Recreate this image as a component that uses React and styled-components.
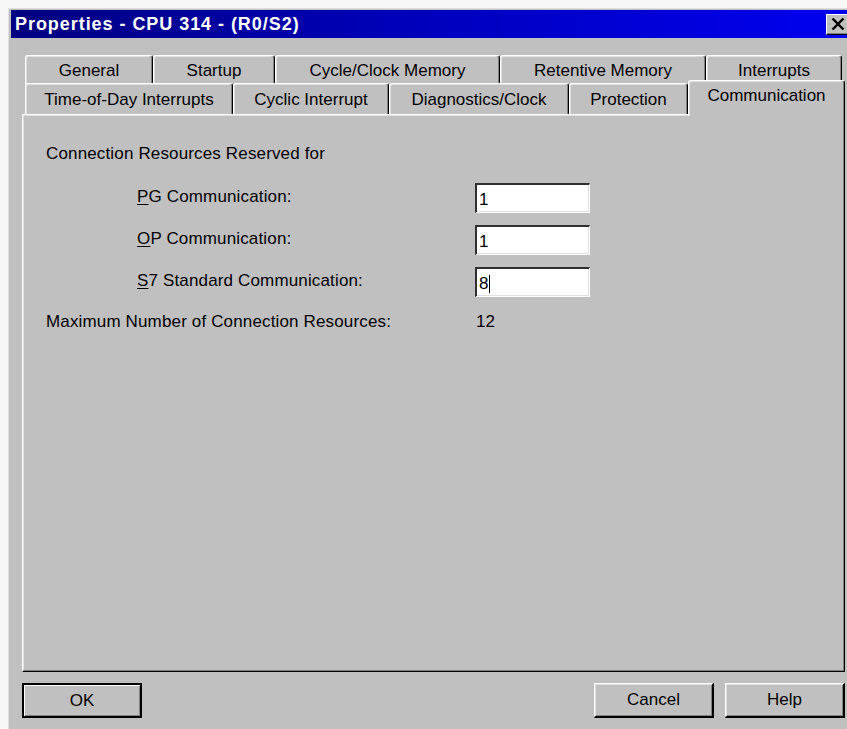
import React from 'react';
import styled, { createGlobalStyle } from 'styled-components';

const GlobalStyle = createGlobalStyle`
  html, body { margin: 0; padding: 0; background: #f7f7f7; }
  body { font-family: "Liberation Sans", Arial, sans-serif; color: #000; }
`;

const Screen = styled.div`
  width: 847px;
  height: 729px;
  overflow: hidden;
  box-sizing: border-box;
  padding: 8px 0 0 8px;
`;

const Window = styled.div`
  width: 845px;
  height: 740px;
  box-sizing: border-box;
  background: #c0c0c0;
  border-top: 1px solid #dfdfdf;
  border-left: 1px solid #dfdfdf;
  padding: 1px 2px 0 2px;
  display: flex;
  flex-direction: column;
`;

const TitleBar = styled.div`
  height: 28px;
  flex: none;
  display: flex;
  align-items: center;
  justify-content: space-between;
  padding: 0 2px 0 4px;
  background: linear-gradient(to right, #000080 0%, #0000b8 45%, #0000f0 100%);
`;

const Title = styled.span`
  color: #fff;
  font-weight: bold;
  font-size: 18px;
  letter-spacing: 0.95px;
`;

const CloseButton = styled.div`
  width: 23px;
  height: 21px;
  box-sizing: border-box;
  background: #c0c0c0;
  border-top: 1px solid #fff;
  border-left: 1px solid #fff;
  border-right: 1px solid #000;
  border-bottom: 1px solid #000;
  box-shadow: inset -1px -1px 0 #808080;
  display: flex;
  align-items: center;
  justify-content: center;
`;

const Body = styled.div`
  padding: 17px 0 0 11px;
  display: flex;
  flex-direction: column;
`;

const TabStrip = styled.div`
  padding-left: 3px;
  display: flex;
  flex-direction: column;
`;

const TabRow = styled.div`
  display: flex;
  align-items: flex-end;
  height: ${p => p.$h}px;
  margin-top: ${p => p.$offset || 0}px;
`;

const Tab = styled.div`
  width: ${p => p.$w}px;
  height: ${p => (p.$active ? p.$h + 5 : p.$h)}px;
  margin-bottom: ${p => (p.$active ? -2 : 0)}px;
  flex: none;
  box-sizing: border-box;
  background: #c0c0c0;
  border-top: 1px solid #fff;
  border-left: 1px solid #fff;
  border-right: 1px solid #000;
  border-radius: 3px 3px 0 0;
  box-shadow: inset -1px 0 0 #808080, inset 1px 1px 0 #dfdfdf;
  display: flex;
  justify-content: center;
  padding-top: ${p => p.$pad}px;
  font-size: 17px;
  white-space: nowrap;
  ${p => p.$active && 'position: relative; z-index: 1;'}
`;

const Panel = styled.div`
  width: 823px;
  height: 558px;
  box-sizing: border-box;
  background: #c0c0c0;
  border-top: 1px solid #fff;
  border-left: 1px solid #fff;
  border-right: 1px solid #000;
  border-bottom: 1px solid #000;
  box-shadow: inset -1px -1px 0 #808080, inset 1px 1px 0 #dfdfdf;
  padding: 29px 0 0 23px;
  font-size: 17px;
  letter-spacing: 0.15px;
`;

const Heading = styled.div`
  line-height: 20px;
`;

const FormGrid = styled.div`
  display: grid;
  grid-template-columns: 338px 115px;
  grid-auto-rows: 30px;
  row-gap: 12px;
  margin: 19px 0 0 91px;
  align-items: center;
`;

const Label = styled.span`
  line-height: 20px;
  margin-top: -2px;
`;

const Mnemonic = styled.span`
  text-decoration: underline;
  text-underline-offset: 2px;
`;

const Field = styled.div`
  height: 30px;
  box-sizing: border-box;
  background: #fff;
  border-top: 2px solid #303030;
  border-left: 2px solid #303030;
  border-right: 1px solid #fff;
  border-bottom: 1px solid #fff;
  box-shadow: inset -1px -1px 0 #dfdfdf;
  padding: 2px 0 0 2px;
  display: flex;
  align-items: center;
  font-size: 17px;
`;

const Caret = styled.span`
  display: inline-block;
  width: 1px;
  height: 18px;
  background: #000;
`;

const MaxRow = styled.div`
  display: flex;
  margin-top: 15px;
  line-height: 20px;
`;

const MaxLabel = styled.span`
  width: 430px;
`;

const Footer = styled.div`
  width: 823px;
  margin-top: 11px;
  display: flex;
  align-items: center;
  gap: 11px;
`;

const Spacer = styled.div`
  flex: 1;
`;

const Button = styled.div`
  width: 120px;
  height: 35px;
  box-sizing: border-box;
  background: #c0c0c0;
  display: flex;
  align-items: center;
  justify-content: center;
  font-size: 17px;
  ${p =>
    p.$default
      ? `border: 2px solid #000;
         box-shadow: inset 1px 1px 0 #fff, inset -1px -1px 0 #808080;`
      : `border-top: 1px solid #fff;
         border-left: 1px solid #fff;
         border-right: 2px solid #000;
         border-bottom: 2px solid #000;
         box-shadow: inset 1px 1px 0 #dfdfdf, inset -1px -1px 0 #808080;`}
`;

const backTabs = [
  { label: 'General', w: 128 },
  { label: 'Startup', w: 122 },
  { label: 'Cycle/Clock Memory', w: 225 },
  { label: 'Retentive Memory', w: 206 },
  { label: 'Interrupts', w: 136 },
];

const frontTabs = [
  { label: 'Time-of-Day Interrupts', w: 208 },
  { label: 'Cyclic Interrupt', w: 156 },
  { label: 'Diagnostics/Clock', w: 180 },
  { label: 'Protection', w: 119 },
  { label: 'Communication', w: 157, active: true },
];

export default function App() {
  return (
    <>
      <GlobalStyle />
      <Screen>
        <Window>
          <TitleBar>
            <Title>Properties - CPU 314 - (R0/S2)</Title>
            <CloseButton>
              <svg width="14" height="12" viewBox="0 0 14 12">
                <path d="M1.5 0.5 L12.5 11.5 M12.5 0.5 L1.5 11.5" stroke="#000" strokeWidth="2.4" />
              </svg>
            </CloseButton>
          </TitleBar>
          <Body>
            <TabStrip>
              <TabRow $h={29}>
                {backTabs.map(t => (
                  <Tab key={t.label} $w={t.w} $h={29} $pad={5}>
                    {t.label}
                  </Tab>
                ))}
              </TabRow>
              <TabRow $h={31} $offset={-1}>
                {frontTabs.map(t => (
                  <Tab key={t.label} $w={t.w} $h={31} $pad={t.active ? 5 : 6} $active={t.active}>
                    {t.label}
                  </Tab>
                ))}
              </TabRow>
            </TabStrip>
            <Panel>
              <Heading>Connection Resources Reserved for</Heading>
              <FormGrid>
                <Label>
                  <Mnemonic>P</Mnemonic>G Communication:
                </Label>
                <Field>1</Field>
                <Label>
                  <Mnemonic>O</Mnemonic>P Communication:
                </Label>
                <Field>1</Field>
                <Label>
                  <Mnemonic>S</Mnemonic>7 Standard Communication:
                </Label>
                <Field>
                  8<Caret />
                </Field>
              </FormGrid>
              <MaxRow>
                <MaxLabel>Maximum Number of Connection Resources:</MaxLabel>
                <span>12</span>
              </MaxRow>
            </Panel>
            <Footer>
              <Button $default>OK</Button>
              <Spacer />
              <Button>Cancel</Button>
              <Button>Help</Button>
            </Footer>
          </Body>
        </Window>
      </Screen>
    </>
  );
}
